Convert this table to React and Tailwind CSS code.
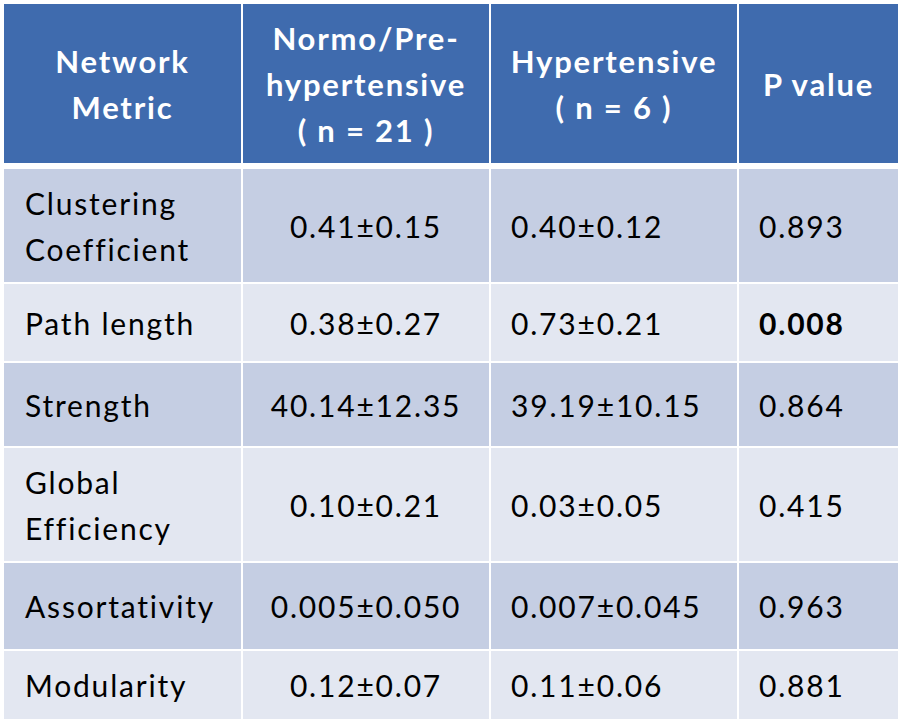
const cols = "grid grid-cols-[237px_246px_246px_159px] gap-x-[2px]";

const rows = [
  { metric: ["Clustering", "Coefficient"], a: "0.41±0.15", b: "0.40±0.12", p: "0.893", h: "h-[113px]", dark: true },
  { metric: ["Path length"], a: "0.38±0.27", b: "0.73±0.21", p: "0.008", bold: true, h: "h-[77px]" },
  { metric: ["Strength"], a: "40.14±12.35", b: "39.19±10.15", p: "0.864", h: "h-[83px]", dark: true },
  { metric: ["Global", "Efficiency"], a: "0.10±0.21", b: "0.03±0.05", p: "0.415", h: "h-[113px]" },
  { metric: ["Assortativity"], a: "0.005±0.050", b: "0.007±0.045", p: "0.963", h: "h-[86px]", dark: true },
  { metric: ["Modularity"], a: "0.12±0.07", b: "0.11±0.06", p: "0.881", h: "h-[68px]" },
];

function HeadCell({ lines }) {
  return (
    <div className="flex flex-col items-center justify-center bg-[#3f6bae] text-center text-[31px] font-bold text-white">
      {lines.map((l) => (
        <span key={l}>{l}</span>
      ))}
    </div>
  );
}

export default function App() {
  return (
    <div
      className="h-[722px] w-[900px] bg-white pl-[4px] pt-[4px] text-[30px] leading-[46px] tracking-[0.06em] text-black"
      style={{ fontFamily: "Lato, 'Open Sans', sans-serif" }}
    >
      <div className={`${cols} h-[159px] mb-[6px]`}>
        <HeadCell lines={["Network", "Metric"]} />
        <HeadCell lines={["Normo/Pre-", "hypertensive", "( n = 21 )"]} />
        <HeadCell lines={["Hypertensive", "( n = 6 )"]} />
        <HeadCell lines={["P value"]} />
      </div>

      <div className="flex flex-col gap-y-[2px]">
        {rows.map((r) => {
          const bg = r.dark ? "bg-[#c5cee3]" : "bg-[#e3e7f1]";
          return (
            <div key={r.p} className={`${cols} ${r.h}`}>
              <div className={`${bg} flex flex-col justify-center pl-[21px]`}>
                {r.metric.map((m) => (
                  <span key={m}>{m}</span>
                ))}
              </div>
              <div className={`${bg} flex items-center justify-center`}>{r.a}</div>
              <div className={`${bg} flex items-center pl-[20px]`}>{r.b}</div>
              <div className={`${bg} flex items-center pl-[20px] ${r.bold ? "font-bold" : ""}`}>{r.p}</div>
            </div>
          );
        })}
      </div>
    </div>
  );
}
